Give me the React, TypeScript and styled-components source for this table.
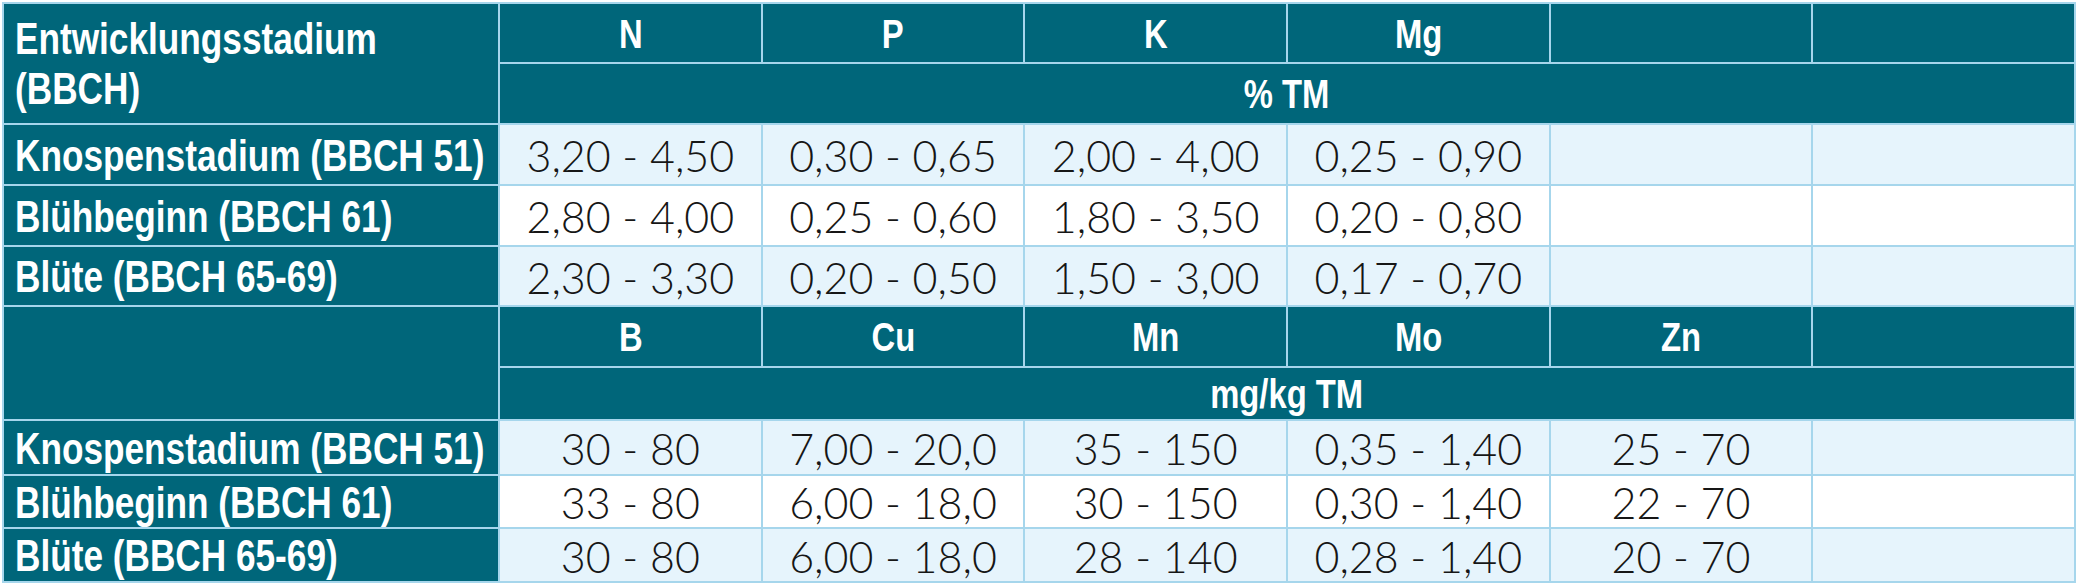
import React from "react";
import styled, { createGlobalStyle } from "styled-components";

const Global = createGlobalStyle`
  html, body { margin: 0; padding: 0; background: #ffffff; }
  body { font-family: "Liberation Sans", Arial, sans-serif; }
`;

const Page = styled.div`
  padding: 2px 0 0 2px;
  width: 2079px;
  box-sizing: border-box;
`;

const Grid = styled.div`
  display: grid;
  width: 2074px;
  box-sizing: border-box;
  padding: 2px;
  gap: 2px;
  background: #a6d6ec;
  grid-template-columns: 494px repeat(6, 1fr);
  grid-template-rows: 58px 59px 59px 59px 58px 59px 51px 53px 51px 52px;
`;

const boldFont = `"Liberation Sans", Arial, sans-serif`;

/* condensed rendering of the bold label face (the reference uses a narrow bold) */
const Narrow = styled.span<{ $origin?: string }>`
  display: inline-block;
  white-space: nowrap;
  transform: scaleX(0.8);
  transform-origin: ${(p) => p.$origin ?? "left"} center;
`;

const HeadCell = styled.div<{ $span?: number }>`
  grid-column: span ${(p) => p.$span ?? 1};
  background: #00667a;
  color: #ffffff;
  font-family: ${boldFont};
  font-weight: 700;
  font-size: 41px;
  display: flex;
  align-items: center;
  justify-content: center;
  padding-top: 2px;
  box-sizing: border-box;
`;

const StageHead = styled.div`
  grid-row: span 2;
  background: #00667a;
  color: #ffffff;
  font-family: ${boldFont};
  font-weight: 700;
  font-size: 44px;
  line-height: 50px;
  display: flex;
  flex-direction: column;
  justify-content: center;
  align-items: flex-start;
  padding-left: 11px;
`;

const StageCell = styled.div`
  background: #00667a;
  color: #ffffff;
  font-family: ${boldFont};
  font-weight: 700;
  font-size: 44px;
  display: flex;
  align-items: center;
  padding-left: 11px;
  padding-top: 2px;
  white-space: nowrap;
  overflow: hidden;
`;

const ValueCell = styled.div<{ $white?: boolean }>`
  background: ${(p) => (p.$white ? "#ffffff" : "#e6f4fc")};
  color: #161616;
  font-family: Lato, Roboto, "Liberation Sans", sans-serif;
  font-weight: 300;
  font-size: 43px;
  display: flex;
  align-items: center;
  justify-content: center;
  padding-top: 2px;
  white-space: nowrap;
`;

type Section = {
  heads: string[];
  unit: string;
  rows: { stage: string; values: string[] }[];
};

const sections: Section[] = [
  {
    heads: ["N", "P", "K", "Mg", "", ""],
    unit: "% TM",
    rows: [
      { stage: "Knospenstadium (BBCH 51)", values: ["3,20 - 4,50", "0,30 - 0,65", "2,00 - 4,00", "0,25 - 0,90", "", ""] },
      { stage: "Blühbeginn (BBCH 61)", values: ["2,80 - 4,00", "0,25 - 0,60", "1,80 - 3,50", "0,20 - 0,80", "", ""] },
      { stage: "Blüte (BBCH 65-69)", values: ["2,30 - 3,30", "0,20 - 0,50", "1,50 - 3,00", "0,17 - 0,70", "", ""] },
    ],
  },
  {
    heads: ["B", "Cu", "Mn", "Mo", "Zn", ""],
    unit: "mg/kg TM",
    rows: [
      { stage: "Knospenstadium (BBCH 51)", values: ["30 - 80", "7,00 - 20,0", "35 - 150", "0,35 - 1,40", "25 - 70", ""] },
      { stage: "Blühbeginn (BBCH 61)", values: ["33 - 80", "6,00 - 18,0", "30 - 150", "0,30 - 1,40", "22 - 70", ""] },
      { stage: "Blüte (BBCH 65-69)", values: ["30 - 80", "6,00 - 18,0", "28 - 140", "0,28 - 1,40", "20 - 70", ""] },
    ],
  },
];

export default function App() {
  return (
    <Page>
      <Global />
      <Grid>
        {sections.map((s, si) => (
          <React.Fragment key={si}>
            <StageHead>
              {si === 0 ? (
                <>
                  <Narrow>Entwicklungsstadium</Narrow>
                  <Narrow>(BBCH)</Narrow>
                </>
              ) : null}
            </StageHead>
            {s.heads.map((h, i) => (
              <HeadCell key={"h" + i}>
                {h ? <Narrow $origin="center">{h}</Narrow> : null}
              </HeadCell>
            ))}
            <HeadCell $span={6}>
              <Narrow $origin="center">{s.unit}</Narrow>
            </HeadCell>
            {s.rows.map((r, ri) => (
              <React.Fragment key={"r" + ri}>
                <StageCell>
                  <Narrow>{r.stage}</Narrow>
                </StageCell>
                {r.values.map((v, vi) => (
                  <ValueCell key={vi} $white={ri === 1}>
                    {v}
                  </ValueCell>
                ))}
              </React.Fragment>
            ))}
          </React.Fragment>
        ))}
      </Grid>
    </Page>
  );
}
